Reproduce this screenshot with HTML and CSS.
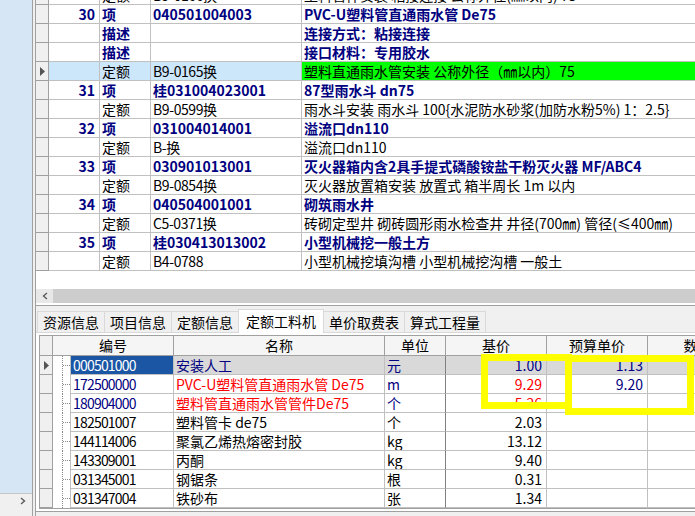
FILE: index.html
```html
<!DOCTYPE html>
<html lang="zh-CN">
<head>
<meta charset="utf-8">
<title>定额工料机</title>
<link rel="stylesheet" href="styles.css">
</head>
<body>
<div class="app">
  <aside class="side">
    <div class="side-fill"></div>
    <div class="side-scroll">
      <svg class="chev" width="6" height="8" viewBox="0 0 6 8"><polyline points="1,1 4.5,4 1,7" fill="none" stroke="#5a5a5a" stroke-width="1.4"/></svg>
    </div>
    <div class="side-foot"></div>
  </aside>
  <div class="splitter"></div>
  <main class="main">
    <section class="top-pane">
      <div class="top-grid-wrap">
        <table class="grid top-grid">
          <colgroup><col class="tc-rh"><col class="tc-no"><col class="tc-type"><col class="tc-code"><col class="tc-name"></colgroup>
          <tbody>
            <tr><td class="rh"></td><td class="no"></td><td class="type">定额</td><td class="code">B9-0166换</td><td class="name">塑料管件安装 粘接连接 公称外径(㎜以内) 75</td></tr>
            <tr class="item"><td class="rh"></td><td class="no">30</td><td class="type">项</td><td class="code">040501004003</td><td class="name">PVC-U塑料管直通雨水管 De75</td></tr>
            <tr class="item"><td class="rh"></td><td class="no"></td><td class="type">描述</td><td class="code"></td><td class="name">连接方式：粘接连接</td></tr>
            <tr class="item"><td class="rh"></td><td class="no"></td><td class="type">描述</td><td class="code"></td><td class="name">接口材料：专用胶水</td></tr>
            <tr class="sel"><td class="rh"><svg class="tri" width="5" height="9" viewBox="0 0 5 9"><polygon points="0,0 5,4.5 0,9" fill="#555"/></svg></td><td class="no"></td><td class="type">定额</td><td class="code">B9-0165换</td><td class="name hl">塑料直通雨水管安装 公称外径（㎜以内）75</td></tr>
            <tr class="item"><td class="rh"></td><td class="no">31</td><td class="type">项</td><td class="code">桂031004023001</td><td class="name">87型雨水斗 dn75</td></tr>
            <tr><td class="rh"></td><td class="no"></td><td class="type">定额</td><td class="code">B9-0599换</td><td class="name">雨水斗安装 雨水斗 100{水泥防水砂浆(加防水粉5%) 1：2.5}</td></tr>
            <tr class="item"><td class="rh"></td><td class="no">32</td><td class="type">项</td><td class="code">031004014001</td><td class="name">溢流口dn110</td></tr>
            <tr><td class="rh"></td><td class="no"></td><td class="type">定额</td><td class="code">B-换</td><td class="name">溢流口dn110</td></tr>
            <tr class="item"><td class="rh"></td><td class="no">33</td><td class="type">项</td><td class="code">030901013001</td><td class="name">灭火器箱内含2具手提式磷酸铵盐干粉灭火器 MF/ABC4</td></tr>
            <tr><td class="rh"></td><td class="no"></td><td class="type">定额</td><td class="code">B9-0854换</td><td class="name">灭火器放置箱安装 放置式 箱半周长 1m 以内</td></tr>
            <tr class="item"><td class="rh"></td><td class="no">34</td><td class="type">项</td><td class="code">040504001001</td><td class="name">砌筑雨水井</td></tr>
            <tr><td class="rh"></td><td class="no"></td><td class="type">定额</td><td class="code">C5-0371换</td><td class="name">砖砌定型井 砌砖圆形雨水检查井 井径(700㎜) 管径(≤400㎜)</td></tr>
            <tr class="item"><td class="rh"></td><td class="no">35</td><td class="type">项</td><td class="code">桂030413013002</td><td class="name">小型机械挖一般土方</td></tr>
            <tr><td class="rh"></td><td class="no"></td><td class="type">定额</td><td class="code">B4-0788</td><td class="name">小型机械挖填沟槽 小型机械挖沟槽 一般土</td></tr>
          </tbody>
        </table>
      </div>
      <div class="hscroll">
        <div class="hs-btn"><svg width="6" height="8" viewBox="0 0 6 8"><polyline points="5,1 1.5,4 5,7" fill="none" stroke="#5a5a5a" stroke-width="1.4"/></svg></div>
        <div class="hs-thumb"></div>
      </div>
    </section>
    <nav class="tabs">
      <div class="tab">资源信息</div>
      <div class="tab">项目信息</div>
      <div class="tab">定额信息</div>
      <div class="tab active">定额工料机</div>
      <div class="tab">单价取费表</div>
      <div class="tab">算式工程量</div>
    </nav>
    <section class="tabpage">
      <table class="grid low-grid">
        <colgroup><col class="lc-rh"><col class="lc-tree"><col class="lc-code"><col class="lc-name"><col class="lc-unit"><col class="lc-base"><col class="lc-bud"><col class="lc-qty"></colgroup>
        <thead>
          <tr><th class="rh"></th><th colspan="2">编号</th><th>名称</th><th class="unit">单位</th><th>基价</th><th>预算单价</th><th>数量</th></tr>
        </thead>
        <tbody>
          <tr class="sel"><td class="rh"><svg class="tri" width="5" height="9" viewBox="0 0 5 9"><polygon points="0,0 5,4.5 0,9" fill="#555"/></svg></td><td class="tree"></td><td class="code cur">000501000</td><td class="name navy">安装人工</td><td class="unit navy">元</td><td class="num navy">1.00</td><td class="num navy">1.13</td><td></td></tr>
          <tr><td class="rh"></td><td class="tree"></td><td class="code navy">172500000</td><td class="name red">PVC-U塑料管直通雨水管 De75</td><td class="unit navy">m</td><td class="num red">9.29</td><td class="num navy">9.20</td><td></td></tr>
          <tr><td class="rh"></td><td class="tree"></td><td class="code navy">180904000</td><td class="name red">塑料管直通雨水管管件De75</td><td class="unit navy">个</td><td class="num red">5.26</td><td class="num"></td><td></td></tr>
          <tr><td class="rh"></td><td class="tree"></td><td class="code">182501007</td><td class="name">塑料管卡 de75</td><td class="unit">个</td><td class="num">2.03</td><td class="num"></td><td></td></tr>
          <tr><td class="rh"></td><td class="tree"></td><td class="code">144114006</td><td class="name">聚氯乙烯热熔密封胶</td><td class="unit">kg</td><td class="num">13.12</td><td class="num"></td><td></td></tr>
          <tr><td class="rh"></td><td class="tree"></td><td class="code">143309001</td><td class="name">丙酮</td><td class="unit">kg</td><td class="num">9.40</td><td class="num"></td><td></td></tr>
          <tr><td class="rh"></td><td class="tree"></td><td class="code">031345001</td><td class="name">钢锯条</td><td class="unit">根</td><td class="num">0.31</td><td class="num"></td><td></td></tr>
          <tr><td class="rh"></td><td class="tree"></td><td class="code">031347004</td><td class="name">铁砂布</td><td class="unit">张</td><td class="num">1.34</td><td class="num"></td><td></td></tr>
        </tbody>
      </table>
    </section>
  </main>
</div>
<div class="mark mark-a"></div>
<div class="mark mark-b"></div>
</body>
</html>
```

FILE: styles.css
```css
* { box-sizing: border-box; }
html, body { margin: 0; padding: 0; }
body {
  width: 695px;
  height: 516px;
  overflow: hidden;
  position: relative;
  background: #f0f0f0;
  font-family: "Noto Sans CJK SC", "Noto Sans", sans-serif;
  font-size: 14px;
  color: #000;
}
.app { display: flex; height: 516px; }

/* left dock */
.side { width: 32px; flex: none; display: flex; flex-direction: column; background: #d7e6f5; }
.side-fill { flex: 1; }
.side-scroll {
  height: 15px; flex: none;
  background: #f0f0f0;
  border-top: 1px solid #c6c6c6;
  display: flex; align-items: center; justify-content: flex-end;
  padding-right: 6px;
}
.side-foot { height: 8px; flex: none; background: #f0f0f0; }
.splitter {
  width: 4px; flex: none;
  background: #f0f0f0;
  border-left: 1px solid #a0a0a0;
  border-right: 1px solid #a0a0a0;
}

.main { flex: 1; min-width: 0; display: flex; flex-direction: column; overflow: hidden; }

/* upper pane */
.top-pane {
  height: 306px; flex: none;
  background: #fff;
  border-bottom: 1px solid #a0a0a0;
  display: flex; flex-direction: column;
  overflow: hidden;
}
.top-grid-wrap { height: 289px; flex: none; overflow: hidden; }
.hscroll { height: 14px; flex: none; display: flex; }
.hs-btn { width: 17px; background: #e8e8e8; display: flex; align-items: center; justify-content: center; }
.hs-thumb { flex: 1; background: #cdcdcd; }

/* grids */
.grid {
  border-collapse: separate;
  border-spacing: 0;
  table-layout: fixed;
}
.grid td, .grid th {
  padding: 0 2px;
  white-space: nowrap;
  overflow: hidden;
  line-height: 18px;
  font-weight: normal;
  border-right: 1px solid #c0c0c0;
  border-bottom: 1px solid #c0c0c0;
  vertical-align: middle;
}
.grid tbody tr { height: 19px; }
.grid td.rh, .grid th.rh {
  padding: 0;
  background: #f0f0f0;
  border-right-color: #a0a0a0;
  border-bottom-color: #a0a0a0;
}
.tri { display: block; }

.top-grid { width: 700px; margin-top: -14px; }
.tc-rh { width: 13px; }
.tc-no { width: 51px; }
.tc-type { width: 51px; }
.tc-code { width: 151px; }
.tc-name { width: 434px; }
.top-grid td.no { text-align: right; padding-right: 4px; }
.top-grid td.code { letter-spacing: -0.4px; }
.top-grid tr.item td.code { letter-spacing: 0; }
.top-grid td.rh .tri { margin-left: 4px; }
.top-grid tr.item td { font-weight: bold; color: #000080; }
.top-grid tr.sel td { background: #cce6fa; }
.top-grid tr.sel td.rh { background: #f0f0f0; }
.top-grid tr.sel td.hl { background: #00ff00; }

/* tabs */
.tabs {
  height: 26px; flex: none;
  display: flex; align-items: flex-end;
  padding-left: 1px;
  background: #f0f0f0;
}
.tab {
  height: 21px;
  padding: 0 5px;
  border: 1px solid #d9d9d9;
  border-bottom: none;
  margin-right: -1px;
  line-height: 20px;
  background: #f0f0f0;
  color: #000;
}
.tab.active {
  height: 24px;
  padding: 0 7px;
  margin-bottom: -1px;
  background: #fff;
  line-height: 22px;
  position: relative;
  z-index: 1;
}

/* lower pane */
.tabpage {
  height: 180px; flex: none;
  background: #fff;
  border-top: 1px solid #d9d9d9;
  border-bottom: 1px solid #a0a0a0;
  padding: 2px 0 0 3px;
  overflow: hidden;
}
.low-grid {
  width: 708px;
  border-left: 1px solid #a0a0a0;
  border-top: 1px solid #a0a0a0;
  border-bottom: 1px solid #a0a0a0;
}
.lc-rh { width: 13px; }
.lc-tree { width: 18px; }
.lc-code { width: 103px; }
.lc-name { width: 211px; }
.lc-unit { width: 61px; }
.lc-base { width: 101px; }
.lc-bud { width: 101px; }
.lc-qty { width: 100px; }
.low-grid thead tr { height: 20px; }
.low-grid th {
  background: #f5f5f5;
  text-align: center;
  border-right-color: #a0a0a0;
  border-bottom-color: #a0a0a0;
  line-height: 19px;
}
.low-grid td.rh .tri { margin-left: 4px; }
.low-grid td.tree {
  padding: 0;
  border-bottom: none;
  background:
    repeating-linear-gradient(to bottom, #8a8a8a 0 1px, transparent 1px 2px) 9px 0 / 1px 100% no-repeat,
    repeating-linear-gradient(to right, #8a8a8a 0 1px, transparent 1px 2px) 10px 9px / 7px 1px no-repeat;
}
.low-grid td.code { letter-spacing: -0.8px; }
.low-grid td.unit { border-right-color: #808080; }
.low-grid td.num { text-align: right; padding-right: 4px; }
.low-grid tr.sel td { background-color: #d9d9d9; }
.low-grid tr.sel td.rh { background-color: #f0f0f0; }
.low-grid tr.sel td.tree { background-color: #fff; }
.low-grid tr.sel td.cur { background: #1b56a5; color: #fff; }
.navy { color: #000080; }
.red { color: #ff0000; }

/* yellow annotation boxes */
.mark {
  position: absolute;
  border: 7px solid #ffff00;
  pointer-events: none;
}
.mark-a { left: 481px; top: 354px; width: 91px; height: 55px; }
.mark-b { left: 565px; top: 355px; width: 129px; height: 60px; }
```
